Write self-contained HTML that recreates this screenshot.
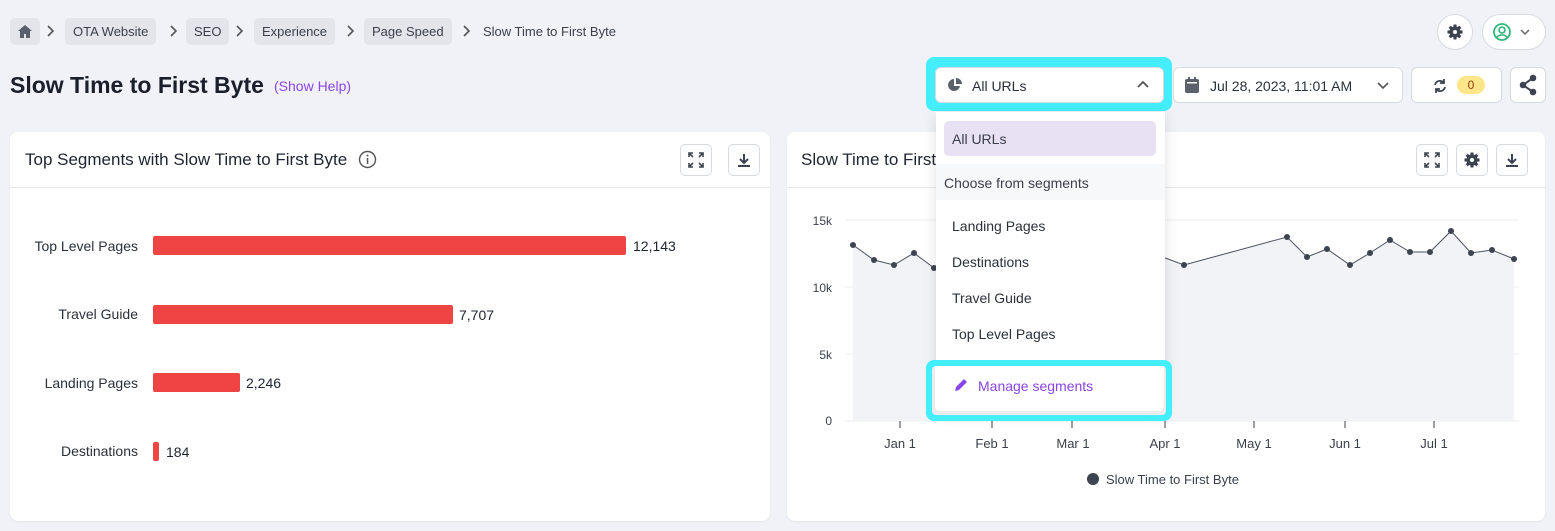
<!DOCTYPE html>
<html><head><meta charset="utf-8"><style>
*{box-sizing:border-box;margin:0;padding:0}
body{width:1555px;height:531px;background:#f0f2f7;font-family:"Liberation Sans",sans-serif;color:#1f2430;position:relative;overflow:hidden}
.abs{position:absolute}
.crumb{position:absolute;top:18px;height:27px;background:#e3e5ea;border-radius:5px;font-size:13px;color:#3a3f4a;line-height:27px;padding:0 8px}
.sep{position:absolute;top:24px}
.btn{position:absolute;background:#fff;border:1px solid #d7dae0;border-radius:6px}
.card{position:absolute;background:#fff;border-radius:8px;box-shadow:0 1px 2px rgba(0,0,0,.06)}
.ib{position:absolute;width:32px;height:32px;border:1px solid #d7dae0;border-radius:5px;background:#fff;display:flex;align-items:center;justify-content:center}
.lbl{position:absolute;font-size:14px;color:#2b303a;text-align:right;width:128px;left:10px}
.bar{position:absolute;left:153px;height:19px;background:#ef4444;border-radius:2px}
.val{position:absolute;font-size:14px;color:#1f2430}
.dd{position:absolute;font-size:14px;color:#2b303a;left:952px}
</style></head><body>
<svg width="0" height="0" style="position:absolute"><defs><g id="gear"><g fill="#3d4350"><rect x="-1.6" y="-7.5" width="3.2" height="15" rx=".6"/><rect x="-1.6" y="-7.5" width="3.2" height="15" rx=".6" transform="rotate(45)"/><rect x="-1.6" y="-7.5" width="3.2" height="15" rx=".6" transform="rotate(90)"/><rect x="-1.6" y="-7.5" width="3.2" height="15" rx=".6" transform="rotate(135)"/><circle r="5.5"/></g><circle r="2" fill="#fff"/></g></defs></svg>
<div class="crumb" style="left:10px;width:30px;padding:0"><svg width="30" height="27" viewBox="0 0 30 27"><path d="M15 7l-7 6h2v7h4v-4h2v4h4v-7h2z" fill="#5a606c"/></svg></div>
<svg class="sep" style="left:45px" width="10" height="14"><path d="M3 2l5 5-5 5" stroke="#555" stroke-width="1.6" fill="none"/></svg>
<div class="crumb" style="left:65px">OTA Website</div>
<svg class="sep" style="left:168px" width="10" height="14"><path d="M3 2l5 5-5 5" stroke="#555" stroke-width="1.6" fill="none"/></svg>
<div class="crumb" style="left:186px">SEO</div>
<svg class="sep" style="left:234px" width="10" height="14"><path d="M3 2l5 5-5 5" stroke="#555" stroke-width="1.6" fill="none"/></svg>
<div class="crumb" style="left:254px">Experience</div>
<svg class="sep" style="left:345px" width="10" height="14"><path d="M3 2l5 5-5 5" stroke="#555" stroke-width="1.6" fill="none"/></svg>
<div class="crumb" style="left:364px">Page Speed</div>
<svg class="sep" style="left:461px" width="10" height="14"><path d="M3 2l5 5-5 5" stroke="#555" stroke-width="1.6" fill="none"/></svg>
<div class="abs" style="left:483px;top:24px;font-size:13px;color:#3a3f4a">Slow Time to First Byte</div>
<div class="abs" style="left:10px;top:72px;font-size:23px;font-weight:bold;color:#1a1f2b">Slow Time to First Byte</div>
<div class="abs" style="left:274px;top:78px;font-size:14px;color:#8b45e6">(Show Help)</div>

<div class="btn" style="left:1437px;top:14px;width:36px;height:36px;border-radius:18px"><svg width="34" height="34" viewBox="-17 -17 34 34"><use href="#gear"/></svg></div>
<div class="btn" style="left:1482px;top:14px;width:64px;height:36px;border-radius:18px"><svg width="62" height="34" viewBox="0 0 62 34"><circle cx="19" cy="17" r="8" fill="none" stroke="#2fb87a" stroke-width="1.8"/><circle cx="19" cy="15" r="3" fill="none" stroke="#2fb87a" stroke-width="1.6"/><path d="M13.5 22.5c3-3.5 8-3.5 11 0" fill="none" stroke="#2fb87a" stroke-width="1.6"/><path d="M38 15l4 4 4-4" stroke="#666" stroke-width="1.5" fill="none"/></svg></div>

<div class="abs" style="left:926px;top:57px;width:246px;height:54px;background:#44eefc;border-radius:8px"></div>
<div class="btn" style="left:935px;top:67px;width:229px;height:36px"><svg class="abs" style="left:11px;top:9px" width="16" height="16"><path d="M7 2a6 6 0 1 0 6 7H7z" fill="#5a606c"/><path d="M9 1v6h6a6 6 0 0 0-6-6z" fill="#5a606c"/></svg><span class="abs" style="left:36px;top:10px;font-size:14px;color:#2b303a">All URLs</span><svg class="abs" style="left:200px;top:11px" width="14" height="12"><path d="M2 8l5-5 5 5" stroke="#555" stroke-width="1.8" fill="none"/></svg></div>
<div class="btn" style="left:1173px;top:67px;width:230px;height:36px"><svg class="abs" style="left:10px;top:9px" width="16" height="17"><rect x="1" y="2" width="14" height="14" rx="2" fill="#5a606c"/><rect x="4" y="0" width="2" height="4" fill="#5a606c"/><rect x="10" y="0" width="2" height="4" fill="#5a606c"/><rect x="3" y="5" width="10" height="1.5" fill="#fff"/></svg><span class="abs" style="left:36px;top:10px;font-size:14px;color:#2b303a">Jul 28, 2023, 11:01 AM</span><svg class="abs" style="left:202px;top:11px" width="14" height="12"><path d="M2 4l5 5 5-5" stroke="#555" stroke-width="1.6" fill="none"/></svg></div>
<div class="btn" style="left:1411px;top:67px;width:91px;height:36px"><svg class="abs" style="left:20px;top:10px" width="16" height="16" viewBox="0 0 16 16"><path d="M3 7a5 5 0 0 1 9-2M13 9a5 5 0 0 1-9 2" stroke="#3d4350" stroke-width="1.8" fill="none"/><path d="M12 1v4H8M4 15v-4h4" stroke="#3d4350" stroke-width="1.8" fill="none"/></svg><div class="abs" style="left:45px;top:8px;width:28px;height:18px;background:#fde68a;border-radius:9px;font-size:12px;color:#92400e;text-align:center;line-height:18px">0</div></div>
<div class="btn" style="left:1510px;top:67px;width:36px;height:36px"><svg width="34" height="34" viewBox="0 0 34 34"><path d="M22 10L12 17l10 7" stroke="#3d4350" stroke-width="2" fill="none"/><circle cx="22" cy="10" r="3.3" fill="#3d4350"/><circle cx="12" cy="17" r="3.3" fill="#3d4350"/><circle cx="22" cy="24" r="3.3" fill="#3d4350"/></svg></div>

<!-- left card -->
<div class="card" style="left:10px;top:132px;width:760px;height:389px">
<div class="abs" style="left:15px;top:18px;font-size:17px;color:#1f2430">Top Segments with Slow Time to First Byte</div>
<svg class="abs" style="left:348px;top:18px" width="19" height="19"><circle cx="9.5" cy="9.5" r="8" fill="none" stroke="#555" stroke-width="1.4"/><rect x="8.8" y="8" width="1.5" height="6" fill="#555"/><circle cx="9.5" cy="5.5" r="1" fill="#555"/></svg>
<div class="ib" style="left:670px;top:12px"><svg width="18" height="18" viewBox="0 0 18 18" stroke="#3d4350" stroke-width="1.6" fill="none"><path d="M2 6V2h4M2 2l4 4M16 6V2h-4M16 2l-4 4M2 12v4h4M2 16l4-4M16 12v4h-4M16 16l-4-4"/></svg></div>
<div class="ib" style="left:718px;top:12px"><svg width="16" height="16"><path d="M8 2v8M4 7l4 4 4-4" stroke="#3d4350" stroke-width="2" fill="none"/><rect x="2" y="13" width="12" height="2" fill="#3d4350"/></svg></div>
<div class="abs" style="left:0;top:55px;width:760px;height:1px;background:#e5e7eb"></div>
</div>
<div class="lbl" style="top:238px">Top Level Pages</div><div class="bar" style="top:236px;width:473px"></div><div class="val" style="left:633px;top:238px">12,143</div>
<div class="lbl" style="top:306px">Travel Guide</div><div class="bar" style="top:305px;width:300px"></div><div class="val" style="left:459px;top:307px">7,707</div>
<div class="lbl" style="top:375px">Landing Pages</div><div class="bar" style="top:373px;width:87px"></div><div class="val" style="left:246px;top:375px">2,246</div>
<div class="lbl" style="top:443px">Destinations</div><div class="bar" style="top:442px;width:6px"></div><div class="val" style="left:166px;top:444px">184</div>

<!-- right card -->
<div class="card" style="left:787px;top:132px;width:758px;height:389px">
<div class="abs" style="left:14px;top:18px;font-size:17px;color:#1f2430">Slow Time to First Byte</div>
<div class="ib" style="left:629px;top:12px"><svg width="18" height="18" viewBox="0 0 18 18" stroke="#3d4350" stroke-width="1.6" fill="none"><path d="M2 6V2h4M2 2l4 4M16 6V2h-4M16 2l-4 4M2 12v4h4M2 16l4-4M16 12v4h-4M16 16l-4-4"/></svg></div>
<div class="ib" style="left:669px;top:12px"><svg width="18" height="18" viewBox="-9 -9 18 18"><use href="#gear"/></svg></div>
<div class="ib" style="left:709px;top:12px"><svg width="16" height="16"><path d="M8 2v8M4 7l4 4 4-4" stroke="#3d4350" stroke-width="2" fill="none"/><rect x="2" y="13" width="12" height="2" fill="#3d4350"/></svg></div>
<div class="abs" style="left:0;top:55px;width:758px;height:1px;background:#e5e7eb"></div>
</div>
<svg class="abs" style="left:787px;top:190px" width="758" height="320" viewBox="787 190 758 320" font-family="Liberation Sans, sans-serif" font-size="12" fill="#3a3f4a">
<g stroke="#eceef2"><line x1="845" y1="220" x2="1519" y2="220"/><line x1="845" y1="287" x2="1519" y2="287"/><line x1="845" y1="354" x2="1519" y2="354"/><line x1="845" y1="421" x2="1519" y2="421"/></g>
<text x="832" y="225" text-anchor="end">15k</text><text x="832" y="292" text-anchor="end">10k</text><text x="832" y="359" text-anchor="end">5k</text><text x="832" y="425" text-anchor="end">0</text>
<polygon fill="#f2f3f6" points="853,421 853,245 874,260 894,265 914,253 934,268 960,262 990,258 1020,262 1050,260 1080,258 1110,255 1140,252 1160,256 1184,265 1287,237 1307,257 1327,249 1350,265 1370,253 1390,240 1410,252 1430,252 1451,231 1471,253 1492,250 1514,259 1514,421"/>
<polyline fill="none" stroke="#4a5060" stroke-width="1" points="853,245 874,260 894,265 914,253 934,268 960,262 990,258 1020,262 1050,260 1080,258 1110,255 1140,252 1160,256 1184,265 1287,237 1307,257 1327,249 1350,265 1370,253 1390,240 1410,252 1430,252 1451,231 1471,253 1492,250 1514,259"/>
<g fill="#3d4350"><circle cx="853" cy="245" r="3"/><circle cx="874" cy="260" r="3"/><circle cx="894" cy="265" r="3"/><circle cx="914" cy="253" r="3"/><circle cx="934" cy="268" r="3"/><circle cx="1184" cy="265" r="3"/><circle cx="1287" cy="237" r="3"/><circle cx="1307" cy="257" r="3"/><circle cx="1327" cy="249" r="3"/><circle cx="1350" cy="265" r="3"/><circle cx="1370" cy="253" r="3"/><circle cx="1390" cy="240" r="3"/><circle cx="1410" cy="252" r="3"/><circle cx="1430" cy="252" r="3"/><circle cx="1451" cy="231" r="3"/><circle cx="1471" cy="253" r="3"/><circle cx="1492" cy="250" r="3"/><circle cx="1514" cy="259" r="3"/></g>
<g stroke="#3a3f4a"><line x1="900" y1="421" x2="900" y2="428"/><line x1="992" y1="421" x2="992" y2="428"/><line x1="1072" y1="421" x2="1072" y2="428"/><line x1="1165" y1="421" x2="1165" y2="428"/><line x1="1254" y1="421" x2="1254" y2="428"/><line x1="1345" y1="421" x2="1345" y2="428"/><line x1="1434" y1="421" x2="1434" y2="428"/></g>
<g text-anchor="middle" font-size="13"><text x="900" y="448">Jan 1</text><text x="992" y="448">Feb 1</text><text x="1073" y="448">Mar 1</text><text x="1165" y="448">Apr 1</text><text x="1254" y="448">May 1</text><text x="1345" y="448">Jun 1</text><text x="1434" y="448">Jul 1</text></g>
<circle cx="1093" cy="479" r="6" fill="#3d4350"/><text x="1106" y="484" font-size="13">Slow Time to First Byte</text>
</svg>

<!-- dropdown -->
<div class="abs" style="left:936px;top:112px;width:229px;height:300px;background:#fff;box-shadow:0 4px 14px rgba(0,0,0,.12);border-radius:0 0 6px 6px"></div>
<div class="abs" style="left:944px;top:121px;width:212px;height:35px;background:#e8e1f3;border-radius:5px"></div>
<div class="dd" style="top:131px;color:#3a3f4a">All URLs</div>
<div class="abs" style="left:936px;top:164px;width:229px;height:36px;background:#f7f8fa"></div>
<div class="dd" style="left:944px;top:175px;color:#3a3f4a">Choose from segments</div>
<div class="dd" style="top:218px">Landing Pages</div>
<div class="dd" style="top:254px">Destinations</div>
<div class="dd" style="top:290px">Travel Guide</div>
<div class="dd" style="top:326px">Top Level Pages</div>
<div class="abs" style="left:926px;top:360px;width:246px;height:61px;background:#44eefc;border-radius:8px"></div>
<div class="abs" style="left:932px;top:366px;width:234px;height:49px;background:#ececef;border-radius:4px"></div>
<div class="abs" style="left:935px;top:366px;width:229px;height:45px;background:#fff;border-radius:0 0 5px 5px"></div>
<svg class="abs" style="left:953px;top:377px" width="16" height="16"><path d="M2 14l1-4 8-8 3 3-8 8z" fill="#8b45e6"/></svg>
<div class="abs" style="left:978px;top:378px;font-size:14px;color:#8b45e6">Manage segments</div>
</body></html>
